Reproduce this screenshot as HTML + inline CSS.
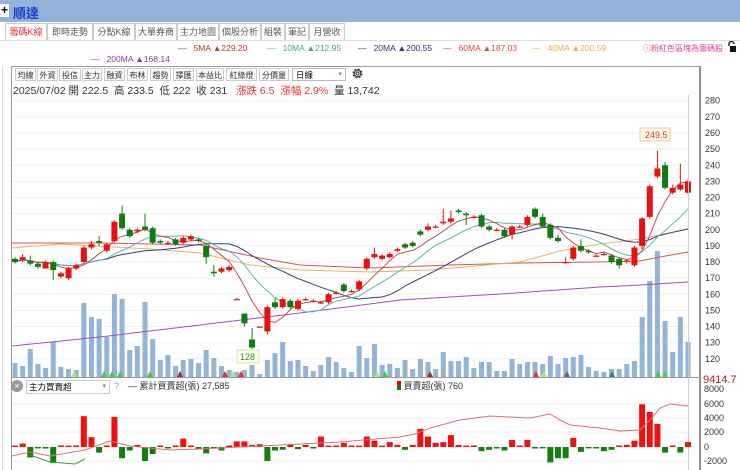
<!DOCTYPE html><html><head><meta charset="utf-8"><style>
body{margin:0;width:740px;height:470px;overflow:hidden;background:#fff;font-family:"Liberation Sans","Noto Sans CJK TC",sans-serif;position:relative}
.a{position:absolute;white-space:nowrap}
#title{left:0;top:0;width:740px;height:22px;background:#95b3d8}
.tab{position:absolute;top:23px;height:16px;border:1px solid #ccc;border-bottom:none;font-size:9px;color:#555;text-align:center;line-height:16px;white-space:nowrap;overflow:hidden}
.lg{font-size:8.5px;top:43px}
.tb{position:absolute;top:68px;height:13px;border:1px solid #ccc;font-size:8px;color:#333;line-height:13px;text-align:center;background:#fafafa;white-space:nowrap;overflow:hidden;box-sizing:border-box}
</style></head><body>
<div id="title" class="a"></div>
<div class="a" style="left:0;top:4px;width:9px;height:13px;background:#fff;font-size:12px;font-weight:bold;line-height:13px;text-align:center">+</div>
<div class="a" style="left:13px;top:3px;font-size:13px;font-weight:bold;color:#1a3ccc">順達</div>
<div class="tab" style="left:5px;width:40px;color:#d33">籌碼K線</div>
<div class="tab" style="left:47px;width:44px">即時走勢</div>
<div class="tab" style="left:93px;width:40px">分點K線</div>
<div class="tab" style="left:135px;width:40px">大單券商</div>
<div class="tab" style="left:177px;width:40px">主力地圖</div>
<div class="tab" style="left:219px;width:40px">個股分析</div>
<div class="tab" style="left:261px;width:22px">組裝</div>
<div class="tab" style="left:285px;width:22px">筆記</div>
<div class="tab" style="left:309px;width:34px">月營收</div>
<div class="a" style="left:0;top:40px;width:740px;height:1px;background:#ddd"></div>
<div class="a lg" style="left:178px;color:#c0392b">—&nbsp;&nbsp; 5MA ▲229.20</div>
<div class="a lg" style="left:267px;color:#3aa79a">—&nbsp;&nbsp; 10MA ▲212.95</div>
<div class="a lg" style="left:358px;color:#33337f">—&nbsp;&nbsp; 20MA ▲200.55</div>
<div class="a lg" style="left:443px;color:#e04848">—&nbsp;&nbsp; 60MA ▲187.03</div>
<div class="a lg" style="left:532px;color:#e8b04a">—&nbsp;&nbsp; 40MA ▲200.59</div>
<div class="a lg" style="left:643px;color:#e040a0;font-size:8px">ⓘ粉紅色區塊為籌碼股</div>
<svg class="a" style="left:727px;top:41px" width="10" height="12"><path d="M2 5V3a2.5 2.5 0 0 1 5 0" fill="none" stroke="#111" stroke-width="1.3"/><rect x="3" y="5" width="6" height="6" fill="#111"/></svg>
<div class="a lg" style="left:91px;top:54px;color:#8a3a9a">—&nbsp;&nbsp; 200MA ▲168.14</div>
<div class="a" style="left:11px;top:66px;width:689px;height:404px;border:1px solid #999;border-bottom:none;box-sizing:border-box"></div>
<div class="a" style="left:2px;top:66px;width:1px;height:404px;background:#ddd"></div>
<div id="tbs"></div>
<div class="a" style="left:292px;top:68px;width:54px;height:13px;border:1px solid #bbb;font-size:8.5px;line-height:12px;padding-left:3px;box-sizing:border-box">日線<span style="position:absolute;right:3px;color:#888;font-size:7px">▾</span></div>
<svg class="a" style="left:351px;top:67px" width="13" height="13" viewBox="0 0 13 13"><circle cx="6.5" cy="6.5" r="4.2" fill="none" stroke="#333" stroke-width="1.6" stroke-dasharray="2 1.3"/><circle cx="6.5" cy="6.5" r="3.3" fill="none" stroke="#333" stroke-width="1"/><circle cx="6.5" cy="6.5" r="1.5" fill="none" stroke="#333" stroke-width="1"/></svg>
<div class="a" style="left:13px;top:83px;font-size:10.5px;color:#333">2025/07/02 開 222.5&nbsp; 高 233.5&nbsp; 低 222&nbsp; 收 231&nbsp;&nbsp; <span style="color:#e33">漲跌 6.5&nbsp; 漲幅 2.9%</span>&nbsp; 量 13,742</div>
<svg class="a" style="left:0;top:0" width="740" height="470" id="sv"></svg>
<div class="a" style="left:11px;top:380px;width:12px;height:12px;border-radius:6px;background:#999;color:#fff;font-size:9px;line-height:12px;text-align:center">×</div>
<div class="a" style="left:26px;top:380px;width:80px;height:12px;border:1px solid #ccc;font-size:8.5px;line-height:12px;padding-left:2px">主力買賣超<span style="position:absolute;right:3px;color:#888;font-size:7px">▾</span></div>
<div class="a" style="left:114px;top:381px;font-size:9px;color:#5aa0d8">?</div>
<div class="a" style="left:128px;top:379px;font-size:9px;color:#333">— 累計買賣超(張) 27,585</div>
<div class="a" style="left:397px;top:379px;font-size:9px;color:#333"><span style="display:inline-block;width:4px;height:9px;background:linear-gradient(#e00 50%,#080 50%);vertical-align:-1px"></span> 買賣超(張) 760</div>
<div class="a" style="left:703px;top:374px;font-size:11px;color:#b22">9414.7</div>
<script>
var C=[[182,180,183,179],[181,183,185,180],[181,179,184,178],[179,177,180,176],[176,180,181,176],[180,175,181,169],[171,173,174,170],[170,176,177,169],[176,178,179,175],[180,189,190,179],[189,191,193,188],[193,192,196,190],[187,191,192,186],[193,205,206,192],[210,201,215,200],[200,196,201,195],[199,200,201,198],[202,200,210,199],[201,192,202,191],[193,192,194,191],[192,192,193,191],[194,191,195,190],[192,195,196,191],[194,196,197,193],[194,193,195,192],[190,183,191,179],[174,173,178,171],[174,176,177,173],[175,177,178,174],[157,157,158,157],[148,142,148,140],[132,127,139,126],[140,140,140,140],[137,152,153,135],[155,152,158,151],[152,157,158,151],[156,152,157,151],[151,156,157,150],[157,157,158,156],[156,156,157,155],[155,155,156,154],[155,160,161,154],[161,161,162,160],[166,162,167,161],[162,162,163,161],[163,168,169,162],[176,182,183,175],[183,185,189,182],[182,184,185,181],[183,185,186,182],[187,188,189,186],[191,189,192,188],[192,190,193,189],[199,197,200,196],[200,202,204,199],[202,202,203,201],[204,205,213,203],[205,207,212,204],[212,211,213,210],[210,209,211,203],[208,208,209,207],[209,202,210,201],[202,200,203,199],[200,200,201,199],[200,196,201,195],[197,202,203,194],[202,202,203,201],[203,208,209,202],[213,208,214,207],[208,202,210,201],[203,195,204,194],[195,193,197,192],[180,180,183,179],[182,189,190,181],[190,187,194,186],[187,186,188,185],[184,184,185,183],[185,185,186,184],[184,180,185,179],[182,178,183,176],[181,181,182,179],[178,189,190,177],[190,207,208,188],[208,227,228,207],[233,238,249,232],[240,226,242,225],[223,226,228,222],[225,228,241,224],[223,230,231,222]];
var V=[363,366,349,364,368,342,367,369,370,303,317,319,337,294,299,350,346,302,339,360,355,366,360,359,363,350,358,366,370,372,370,365,374,360,353,342,361,360,366,371,365,357,362,368,372,346,358,344,365,364,368,360,369,359,362,369,352,361,361,357,368,362,362,371,371,359,364,362,362,364,356,364,358,357,355,367,371,372,369,369,364,361,317,281,251,321,352,317,342,330];
var B=[.2,.5,-1.5,-.2,-.1,-2.3,.1,.2,0,4.4,1.4,-.8,.1,4.3,-1.6,-.5,.3,-2,-1,.1,-.1,.1,1.2,.1,-.3,-.9,-.2,-.5,.1,.8,.8,.3,.4,-2,-.5,-.4,.4,-.3,.3,-.1,1.5,.2,.1,.6,.1,.2,1.5,.9,.2,.7,.3,-.4,.3,2.6,1.5,.6,.7,1.7,.3,.2,.1,-.6,-.4,-.1,-.5,1,.1,1,-.1,-.2,-2.2,-1.6,-1.6,1.3,-.7,-.2,-.1,-.6,-.4,.1,.3,.9,6.1,5,3.3,-.8,0,-.8,.7,.7];
var n=C.length,st=673/(n-1),s='';
function X(i){return 15+i*st}function Y(p){return 133+(260-p)*1.613}
for(var p=120;p<=280;p+=10){var y=Y(p);s+='<line x1="12" x2="688" y1="'+y+'" y2="'+y+'" stroke="#f0f0f0"/><text x="705" y="'+(y+3)+'" font-size="9" fill="#333">'+p+'</text>';}
for(var i=0;i<n;i++){s+='<rect x="'+(X(i)-2.5)+'" y="'+V[i]+'" width="5" height="'+(377-V[i])+'" fill="#93b3d8"/>';}
s+='<polyline fill="none" stroke="#a050c0" stroke-width="1" points="12,346 100,337 200,325 300,313 400,300 500,294 600,287 640,285 688,282"/>';
s+='<polyline fill="none" stroke="#e05050" stroke-width="1" points="12,243 100,243 200,245 260,258 300,265 370,268 450,265 520,263 600,262 640,261 660,257 688,252"/>';
s+='<polyline fill="none" stroke="#f0b060" stroke-width="1" points="12,248 60,244 150,249 200,253 250,265 300,270 370,272 430,270 520,262 560,251 600,244 640,239 688,229"/>';
function ma(k,col){var pts=[];for(var i=0;i<n;i++){var a=0,c=0;for(var j=Math.max(0,i-k+1);j<=i;j++){a+=C[j][1];c++}pts.push(X(i).toFixed(1)+','+Y(a/c).toFixed(1))}s+='<polyline fill="none" stroke="'+col+'" stroke-width="1" points="'+pts.join(' ')+'"/>';}
ma(20,'#3a3a8a');ma(10,'#5ab8a8');ma(5,'#c05050');
for(var i=0;i<n;i++){var c=C[i],x=X(i),up=c[1]>=c[0],col=up?'#e81010':'#137a13';var t=Y(Math.max(c[0],c[1])),b=Y(Math.min(c[0],c[1]));s+='<line x1="'+x+'" x2="'+x+'" y1="'+Y(c[2])+'" y2="'+Y(c[3])+'" stroke="'+col+'"/><rect x="'+(x-3)+'" y="'+t+'" width="6" height="'+Math.max(1.2,b-t)+'" fill="'+col+'"/>';}
s+='<rect x="640" y="128" width="30" height="13" fill="#fffbe8" stroke="#e8c8a0"/><text x="645" y="138" font-size="9" fill="#d33">249.5</text>';
s+='<rect x="237" y="350" width="22" height="13" fill="#fbffe8" stroke="#d8e8a0"/><text x="240" y="360" font-size="9" fill="#383">128</text>';
var tri=[[74,'#aaf070'],[104,'#40d040'],[112,'#40d040'],[120,'#40d040'],[150,'#40d040'],[180,'#a03030'],[225,'#d33'],[233,'#aaf070'],[241,'#d33'],[377,'#aaf070'],[385,'#40d040'],[430,'#a03030'],[536,'#d33'],[544,'#aaf070'],[567,'#666'],[612,'#308090'],[658,'#40d040'],[665,'#40d040']];
tri.forEach(function(t){s+='<polygon points="'+(t[0]-3)+',377 '+(t[0]+3)+',377 '+t[0]+',371" fill="'+t[1]+'"/>';});
s+='<line x1="11" x2="700" y1="377.5" y2="377.5" stroke="#999"/><line x1="688.5" x2="688.5" y1="95" y2="470" stroke="#ccc"/><line x1="700.5" x2="700.5" y1="66" y2="470" stroke="#888"/>';
var L=[[6000,404],[4000,418],[2000,432],[0,447],[-2000,461]];
L.forEach(function(l){s+='<line x1="12" x2="688" y1="'+l[1]+'" y2="'+l[1]+'" stroke="#f0f0f0"/><text x="704" y="'+(l[1]+3)+'" font-size="9" fill="#333">'+l[0]+'</text>';});
s+='<text x="704" y="392" font-size="9" fill="#333">8000</text>';
for(var i=0;i<n;i++){var v=B[i],h=Math.abs(v)*7;if(h<1)h=1.5;var x=X(i);s+='<rect x="'+(x-3)+'" y="'+(v>=0?447-h:447)+'" width="6" height="'+h+'" fill="'+(v>=0?'#f01010':'#118011')+'"/>';}
s+='<polyline fill="none" stroke="#e07070" stroke-width="1" points="12,456 30,452 50,456 85,450 110,441 130,446 170,450 200,449 260,446 340,442 400,437 415,434 430,428 460,420 490,416 530,418 550,414 560,420 570,425 600,428 620,431 640,430 650,420 660,408 670,404 688,406"/>';
s+='<polyline fill="none" stroke="#40a040" stroke-width="1" points="30,455 50,462 75,464 85,459"/>';
document.getElementById('sv').innerHTML=s;
var P=[[15,21],[37,21],[59,22],[82,20],[104,21],[127,21],[150,21],[173,21],[196,28],[226,31],[259,30]];
var tb=['均線','外資','投信','主力','融資','布林','趨勢','擇匯','本益比','紅綠燈','分價量'],h='';
tb.forEach(function(t,i){h+='<div class="tb" style="left:'+P[i][0]+'px;width:'+P[i][1]+'px">'+t+'</div>';});
document.getElementById('tbs').innerHTML=h;
</script>
</body></html>
